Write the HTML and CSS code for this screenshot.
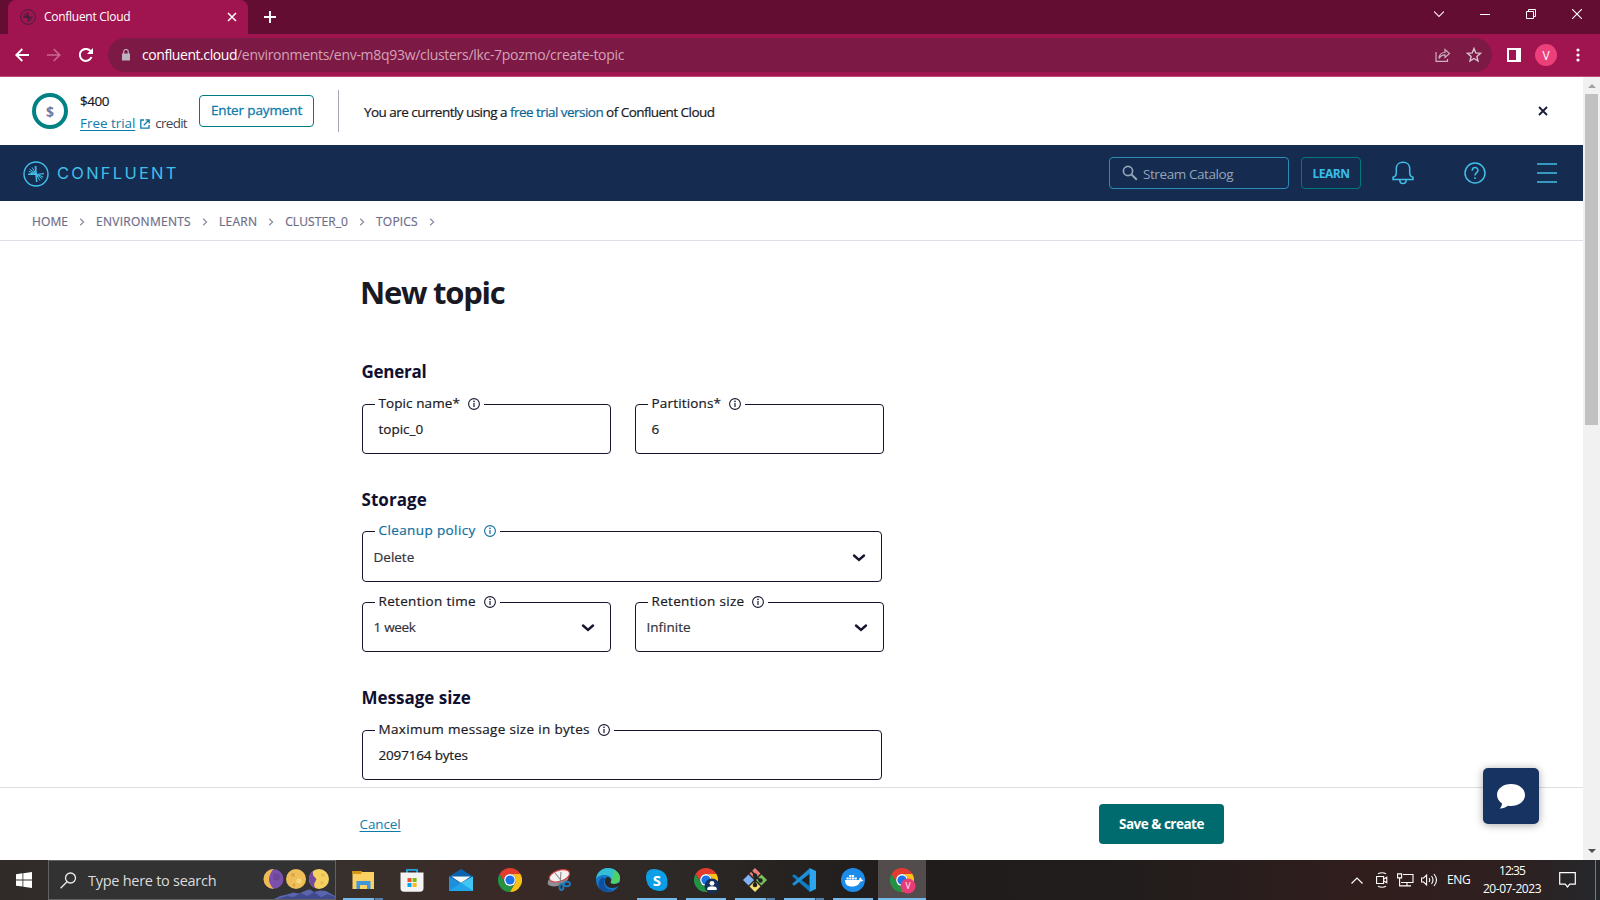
FILE: index.html
```html
<!DOCTYPE html>
<html lang="en">
<head>
<meta charset="utf-8">
<title>Confluent Cloud</title>
<link rel="stylesheet" href="styles.css">
</head>
<body>
<svg class="defs" aria-hidden="true">
  <defs>
    <symbol id="info" viewBox="0 0 12 12"><circle cx="6" cy="6" r="5.4" fill="none" stroke="currentColor" stroke-width="1.1"/><path d="M6 5v4" fill="none" stroke="currentColor" stroke-width="1.200"/><circle cx="6" cy="3.4" r=".8" fill="currentColor"/></symbol>
    <symbol id="chev" viewBox="0 0 14 10"><path d="M2 2.5l5 4.500 5-4.500" fill="none" stroke="currentColor" stroke-width="2.4" stroke-linecap="round"/></symbol>
    <symbol id="crumb" viewBox="0 0 6 8"><path d="M1.2.8L4.6 4 1.2 7.2" fill="none" stroke="currentColor" stroke-width="1.2"/></symbol>
    <symbol id="spark" viewBox="0 0 26 26">
      <circle cx="13" cy="13" r="12" fill="none" stroke="currentColor" stroke-width="1.4"/>
      <path d="M13 13L12 5M13 13L9 6.3M13 13L6.6 8M13 13L5.8 10.3M13 13l1 8M13 13l4 6.700M13 13l6.400 5M13 13l7.300 3" fill="none" stroke="currentColor"/>
      <path d="M5 13.300l6-1.300M21 12.700l-8 .8-8 0M13 5v8l.5 8" fill="none" stroke="currentColor" stroke-width="1.200"/>
    </symbol>
    <symbol id="chrome" viewBox="0 0 24 24">
      <path d="M22.4 6A12 12 0 0 0 1.6 6l5.2 9A6 6 0 0 1 12 6z" fill="#e33b2e"/>
      <path d="M1.6 6A12 12 0 0 0 12 24l5.2-9a6 6 0 0 1-10.4 0z" fill="#229342"/>
      <path d="M12 24A12 12 0 0 0 22.4 6H12a6 6 0 0 1 5.2 9z" fill="#fbc116"/>
      <circle cx="12" cy="12" r="5.9" fill="#fff"/><circle cx="12" cy="12" r="4.6" fill="#1a73e8"/>
    </symbol>
  </defs>
</svg>

<header class="tabstrip">
  <div class="tab">
    <svg class="tab-icon" width="16" height="16"><use href="#spark"/></svg>
    <span class="tab-title">Confluent Cloud</span>
    <svg width="10" height="10" viewBox="0 0 10 10"><path d="M1 1l8 8M9 1L1 9" stroke="#fff" stroke-width="1.5"/></svg>
  </div>
  <svg class="new-tab" width="12" height="12" viewBox="0 0 12 12"><path d="M6 0v12M0 6h12" stroke="#fff" stroke-width="1.9"/></svg>
  <div class="window-buttons">
    <svg width="10" height="12" viewBox="0 0 10 12"><path d="M0 3.500l5 5 5-5" fill="none" stroke="#f3e6ec" stroke-width="1.100"/></svg>
    <svg width="10" height="12" viewBox="0 0 10 12"><path d="M0 6.5h10" stroke="#fff"/></svg>
    <svg width="10" height="10" viewBox="0 0 10 10"><path d="M.5 2.5h7v7h-7zM2.5 2.5v-2h7v7h-2" fill="none" stroke="#fff"/></svg>
    <svg width="10" height="10" viewBox="0 0 10 10"><path d="M0 0l10 10M10 0L0 10" stroke="#fff" stroke-width="1.1"/></svg>
  </div>
</header>

<div class="toolbar">
  <svg width="14" height="14" viewBox="0 0 14 14"><path d="M14 7H1.5M7.3 1L1.3 7l6 6" fill="none" stroke="#fff" stroke-width="1.9"/></svg>
  <svg width="14" height="14" viewBox="0 0 14 14"><path d="M0 7h12.500M6.700 1l6 6-6 6" fill="none" stroke="#c9678f" stroke-width="1.700"/></svg>
  <svg width="14" height="14" viewBox="0 0 14 14"><path d="M12.500 9A6 6 0 1 1 11.600 3.200" fill="none" stroke="#fff" stroke-width="2"/><path d="M14 0v6H8z" fill="#fff"/></svg>
  <div class="omnibox">
    <svg width="8" height="12" viewBox="0 0 8 12"><path d="M0 4.500h8v7H0z" fill="#bcb3bd"/><path d="M1.700 5V2.800a2.300 2.300 0 0 1 4.600 0V5" fill="none" stroke="#bcb3bd" stroke-width="1.200"/></svg>
    <span class="url"><span class="host">confluent.cloud</span><span class="path">/environments/env-m8q93w/clusters/lkc-7pozmo/create-topic</span></span>
    <svg class="share" width="16" height="14" viewBox="0 0 16 14"><path d="M1 4v9.300h11.500V11M4 10.500c.3-4 2.500-6 6-6V1.500l4.500 4-4.500 4v-2.700c-2.700 0-4.500 1-6 3.700z" fill="none" stroke="#cdb0be" stroke-width="1.200"/></svg>
    <svg width="16" height="16" viewBox="0 0 16 16"><path d="M8 1.500l1.800 4.400 4.700.4-3.600 3.100 1.100 4.600L8 11.500 4 14l1.100-4.600L1.500 6.300l4.700-.4z" fill="none" stroke="#d8c3ce" stroke-width="1.400"/></svg>
  </div>
  <svg width="14" height="14" viewBox="0 0 14 14"><path d="M1 1h12v12H1z" fill="none" stroke="#fff" stroke-width="2"/><path d="M9 0h5v14H9z" fill="#fff"/></svg>
  <span class="avatar">V</span>
  <svg class="dots" width="4" height="14" viewBox="0 0 4 14" fill="#fff"><circle cx="2" cy="2" r="1.600"/><circle cx="2" cy="7" r="1.600"/><circle cx="2" cy="12" r="1.600"/></svg>
</div>

<div class="viewport">
  <div class="page">
    <section class="trial">
      <div class="coin">$</div>
      <div class="credit">
        <div class="amount">$400</div>
        <div class="credit-line"><a class="trial-link">Free trial</a><svg width="10" height="10" viewBox="0 0 10 10"><path d="M4 1H.8v8.200H9V6M5.500.8h3.700v3.700M9 1L3.800 6.200" fill="none" stroke="#0f7bab" stroke-width="1.300"/></svg><span class="credit-word">credit</span></div>
      </div>
      <button class="payment">Enter payment</button>
      <span class="divider"></span>
      <p class="notice">You are currently using a <span class="blue">free trial version</span> of Confluent Cloud</p>
      <svg width="10" height="10" viewBox="0 0 10 10"><path d="M1 1l8 8M9 1L1 9" stroke="#1b1f3b" stroke-width="1.900"/></svg>
    </section>

    <nav class="nav">
      <svg class="logo" width="26" height="26"><use href="#spark"/></svg>
      <span class="brand">CONFLUENT</span>
      <div class="search"><svg width="16" height="16" viewBox="0 0 16 16"><circle cx="6" cy="6" r="4.600" fill="none" stroke="#93a5b8" stroke-width="1.700"/><path d="M9.500 9.500l5.300 5.300" stroke="#93a5b8" stroke-width="2"/></svg><span>Stream Catalog</span></div>
      <button class="learn">LEARN</button>
      <svg class="bell" width="22" height="24" viewBox="0 0 22 24" fill="none" stroke="#41bfe8" stroke-width="1.500"><path d="M1 18.500v-2.200C3 15.800 4.300 14 4.300 11.500V7.500C4.300 3.800 7 1.300 11 1.300s6.700 2.500 6.700 6.200v4c0 2.500 1.300 4.300 3.300 4.800v2.200z"/><path d="M7.800 18.700c0 5.200 6.400 5.200 6.400 0"/></svg>
      <svg class="help" width="22" height="22" viewBox="0 0 22 22" fill="none" stroke="#41bfe8" stroke-width="1.500"><circle cx="11" cy="11" r="10"/><path d="M8.200 8.700C8.200 4.600 14 4.700 14 8.300c0 2.300-3 2.400-3 5.200"/><path d="M11 15.300v1.800"/></svg>
      <svg width="20" height="20" viewBox="0 0 20 20"><path d="M0 1h20M0 10h20M0 19h20" stroke="#41bfe8" stroke-width="1.500"/></svg>
    </nav>

    <div class="crumbs">
      <span class="c1">HOME</span><svg width="6" height="8"><use href="#crumb"/></svg>
      <span class="c2">ENVIRONMENTS</span><svg width="6" height="8"><use href="#crumb"/></svg>
      <span class="c3">LEARN</span><svg width="6" height="8"><use href="#crumb"/></svg>
      <span class="c4">CLUSTER_0</span><svg width="6" height="8"><use href="#crumb"/></svg>
      <span class="c5">TOPICS</span><svg width="6" height="8"><use href="#crumb"/></svg>
    </div>

    <main class="form">
      <h1>New topic</h1>
      <h2 class="general">General</h2>
      <div class="row">
        <div class="field"><div class="label l-topic">Topic name*<svg><use href="#info"/></svg></div><div class="value v-topic">topic_0</div></div>
        <div class="field"><div class="label l-part">Partitions*<svg><use href="#info"/></svg></div><div class="value">6</div></div>
      </div>
      <h2 class="storage">Storage</h2>
      <div class="field wide select policy"><div class="label">Cleanup policy<svg><use href="#info"/></svg></div><div class="value">Delete<svg><use href="#chev"/></svg></div></div>
      <div class="row">
        <div class="field select"><div class="label">Retention time<svg><use href="#info"/></svg></div><div class="value v-week">1 week<svg><use href="#chev"/></svg></div></div>
        <div class="field select"><div class="label">Retention size<svg><use href="#info"/></svg></div><div class="value">Infinite<svg><use href="#chev"/></svg></div></div>
      </div>
      <h2 class="size">Message size</h2>
      <div class="field wide"><div class="label">Maximum message size in bytes<svg><use href="#info"/></svg></div><div class="value v-bytes">2097164 bytes</div></div>
    </main>

    <footer class="actions">
      <a class="cancel">Cancel</a>
      <button class="save">Save &amp; create</button>
    </footer>
    <button class="chat" aria-label="Chat"><svg width="30" height="27" viewBox="0 0 30 27"><path d="M15 1C7 1 1 5.700 1 12c0 3.600 2 6.500 5 8.500-.1 2.200-.9 3.500-2.300 5 3.300.1 6-1 8.300-2.700 9 1.200 17-3.600 17-10.800C29 5.700 23 1 15 1z" fill="#fff"/></svg></button>
  </div>
  <div class="scrollbar">
    <svg width="8" height="4" viewBox="0 0 8 4"><path d="M0 4l4-4 4 4z" fill="#a3a3a8"/></svg>
    <div class="thumb"></div>
    <svg width="8" height="4" viewBox="0 0 8 4"><path d="M0 0l4 4 4-4z" fill="#505050"/></svg>
  </div>
</div>

<div class="taskbar">
  <div class="start"><svg width="16" height="16" viewBox="0 0 16 16" fill="#fff"><path d="M0 2.200L6.500 1.300v6.200H0zM7.300 1.200L16 0v7.500H7.300zM0 8.400h6.500v6.200L0 13.700zM7.300 8.400H16V16l-8.700-1.200z"/></svg></div>
  <div class="winsearch">
    <svg width="17" height="17" viewBox="0 0 17 17"><circle cx="10.500" cy="6" r="5" fill="none" stroke="#eee" stroke-width="1.300"/><path d="M7 9.800L.6 16.200" stroke="#eee" stroke-width="1.300"/></svg>
    <span>Type here to search</span>
    <svg class="moons" width="73" height="38" viewBox="0 0 73 38">
      <circle cx="11.500" cy="18" r="10" fill="#7a50aa"/><path d="M11.500 8a10 10 0 0 0 0 20C8 24 6.500 20 7 17s2-6 4.500-9z" fill="#efbb52"/><circle cx="14.500" cy="16" r="3.500" fill="#6d479c"/>
      <circle cx="34" cy="18" r="10" fill="#efc05a"/><circle cx="31" cy="14" r="2" fill="#dfa54c"/><circle cx="37" cy="20" r="2.600" fill="#f8d77c"/><circle cx="32" cy="24" r="1.500" fill="#dda248"/>
      <circle cx="57" cy="18" r="10" fill="#f5d260"/><path d="M51 10a10 10 0 0 0 3 17.500c-2-2-2.500-4-1-6.500s2-3 0-4.500-2.500-4-2-6.500z" fill="#73499f"/><circle cx="61" cy="14" r="1.800" fill="#e5bb58"/><circle cx="60" cy="22" r="1.800" fill="#e5bb58"/>
      <path d="M12 38l6-3 7-1.500 6-2 6 1 8-3.500 3-.5 4 2.500 6-1.500 6 .5 9 5v3z" fill="#5a65ae"/><path d="M16 38l9-3 6 1 8-4 6 3 7-4 7 5 7-3 7 3v2z" fill="#414b8c"/>
    </svg>
  </div>
  <div class="apps">
    <div class="app run"><svg viewBox="0 0 24 24"><path d="M1.500 3h9v1H23v17H1.500z" fill="#fbd164"/><path d="M1.500 3h9v3h-9z" fill="#d9960f"/><path d="M5.500 21v-8h14v8h-3.500v-4H9v4z" fill="#3f97dd"/></svg><i class="split"></i></div>
    <div class="app"><svg viewBox="0 0 24 24"><path d="M7 6V1.800h10V6" fill="none" stroke="#22a3e6" stroke-width="1.800"/><path d="M.5 4.500h23V20q0 3.800-3.500 3.800H4Q.5 23.800.5 20z" fill="#f3f3f4"/><path d="M7.500 10h4v4h-4z" fill="#f0502b"/><path d="M12.600 10h4v4h-4z" fill="#7fba0a"/><path d="M7.500 15h4v4h-4z" fill="#00a4ef"/><path d="M12.600 15h4v4h-4z" fill="#fdb813"/></svg></div>
    <div class="app"><svg viewBox="0 0 24 24"><path d="M0 8.500L12 1l12 7.500v4H0z" fill="#0a63ae"/><path d="M2.500 8.500h19L12 15z" fill="#f7f7f7"/><path d="M0 8.500l12 6.500 12-6.500V23H0z" fill="#1c90dd"/><path d="M24 8.500V23L12 15z" fill="#3fc6f4"/><path d="M0 23l12-8 12 8z" fill="#22a6ea"/></svg></div>
    <div class="app"><svg viewBox="0 0 24 24"><use href="#chrome" width="24" height="24"/></svg></div>
    <div class="app"><svg viewBox="0 0 24 24"><ellipse cx="11" cy="12" rx="11" ry="5.500" fill="#8f9095" transform="rotate(-20 11 12)"/><ellipse cx="12.500" cy="8" rx="10.500" ry="5.500" fill="#f2f2f2" stroke="#d94444" stroke-width="1.200" transform="rotate(-18 12 8)"/><path d="M8 5l9 11M14 4l-1 12" stroke="#888" stroke-width="1.100"/><g fill="none" stroke="#2279b8" stroke-width="1.900"><ellipse cx="14.500" cy="19" rx="2" ry="3"/><ellipse cx="20" cy="16" rx="3" ry="2.200"/></g></svg></div>
    <div class="app"><svg viewBox="0 0 24 24"><circle cx="12" cy="12" r="12" fill="#1677c8"/><path d="M0 11C1 4 6 0 12 0c7 0 12 5 12 10 0 4-3 6-6 6-3 0-4-1-3-2 2-3-1-7-6-7-5 0-8 2-9 4z" fill="#35bfd4"/><path d="M18 1.700c4 2 6 5.300 6 8.300 0 4-3 6-6 6-3 0-4-1-3-2 1.500-2 2-8 3-12.300z" fill="#4fd06a"/><path d="M9 12c-1 5 3 8 7 8 3 0 5-.8 7-2.500l2-3.500-4 1.500c-3 1-7 .5-6.500-1.500 1.500-2-.5-5-2.500-5s-2.500 1.500-3 3z" fill="#2b2726"/><path d="M9 11c-3 6 1 11 8 11-7 4-15 0-14.500-6C3 11 7 8 9 11z" fill="#104f9e"/></svg></div>
    <div class="app run full"><svg viewBox="0 0 24 24"><rect x="1" y="1" width="16" height="16" rx="7" fill="#1299e0"/><rect x="7" y="7" width="15.500" height="16" rx="7" fill="#1299e0"/><circle cx="12" cy="12" r="10.300" fill="#0c9fe5"/><text x="12" y="17.500" text-anchor="middle" class="skype">S</text></svg></div>
    <div class="app run full"><svg viewBox="0 0 24 24"><use href="#chrome" width="24" height="24"/><circle cx="18" cy="18" r="7.500" fill="#16305c"/><circle cx="18" cy="15.300" r="2.400" fill="#fff"/><path d="M13.300 22v-1.500c0-3 9.400-3 9.400 0V22z" fill="#fff"/></svg></div>
    <div class="app run"><svg viewBox="0 0 24 24"><path d="M12 0l5.500 5.500L12 11 6.500 5.500z" fill="#ee7e79"/><path d="M5.500 6.500L11 12l-5.500 5.500L0 12z" fill="#7fb1f4"/><path d="M18.500 6.500L24 12l-5.500 5.500L13 12z" fill="#79c35b"/><path d="M12 13l5.500 5.500L12 24l-5.500-5.500z" fill="#f7dd74"/><path d="M8 2.500l4 4.500v10M12 8l6 5" fill="none" stroke="#222" stroke-width="1.800"/><g fill="#222"><circle cx="12" cy="7.500" r="2.200"/><circle cx="12" cy="17" r="2.300"/><circle cx="17.500" cy="12.500" r="2.200"/></g></svg><i class="split"></i></div>
    <div class="app run"><svg viewBox="0 0 24 24"><path d="M17.500 0L24 3v18l-6.500 3z" fill="#2aa5ee"/><path d="M0 8l2.200-1.700L18 18.500V24z" fill="#0f7dc6"/><path d="M0 16l2.200 1.700L18 5.500V0z" fill="#1b8fda"/></svg><i class="split"></i></div>
    <div class="app run full"><svg viewBox="0 0 24 24"><circle cx="12" cy="12" r="12" fill="#1d8bea"/><path d="M4 12h14c.2-1.500.9-2.300 1.500-2.600.8.6 1 1.400.9 2 .8 0 1.500.2 2 .6-.6 1.200-1.600 1.500-3 1.500C18 16.500 15.500 18.500 11 18.500c-4.500 0-7-2-7-6.500z" fill="#fff"/><path d="M5.500 9.500h2.200v2H5.500zM8.200 9.500h2.200v2H8.200zM10.900 9.500h2.200v2h-2.200zM13.600 9.500h2.200v2h-2.200zM8.200 7h2.200v2H8.200zM10.900 7h2.200v2h-2.200z" fill="#fff"/></svg></div>
    <div class="app run active"><svg viewBox="0 0 24 24"><use href="#chrome" width="24" height="24"/><circle cx="18" cy="18" r="7.500" fill="#e93b78"/><text x="18" y="21" text-anchor="middle" class="badge">V</text></svg></div>
  </div>
  <div class="tray">
    <svg class="t1" width="12" height="7" viewBox="0 0 12 7"><path d="M.5 6.500L6 1l5.500 5.500" fill="none" stroke="#fff" stroke-width="1.200"/></svg>
    <svg class="t2" width="12" height="16" viewBox="0 0 12 16" fill="none" stroke="#fff" stroke-width="1.100"><path d="M.6 4.500h7v7h-7zM7.800 7l3-1.800v5.600L7.800 9M2 1.700q4-2 8 0M2 14.300q4 2 8 0"/></svg>
    <svg class="t3" width="17" height="14" viewBox="0 0 17 14" fill="none" stroke="#fff" stroke-width="1.100"><path d="M6 1.500h10v8H4M10 9.500v3M6 12.900h8M.6.900h4v4h-4zM2.600 5v7.900H6"/></svg>
    <svg class="t4" width="17" height="14" viewBox="0 0 17 14" fill="none" stroke="#fff" stroke-width="1.100"><path d="M.6 5v4h2l3 3V2l-3 3zM8 5q1.500 2 0 4M10.500 3q3 4 0 8M13 1q5 6 0 12"/></svg>
    <span class="lang">ENG</span>
    <div class="clock"><span class="time">12:35</span><span>20-07-2023</span></div>
    <svg class="note" width="17" height="16" viewBox="0 0 17 16"><path d="M.7.700h15.600v11.500h-5.500L8.500 15l-2.300-2.800H.7z" fill="none" stroke="#fff" stroke-width="1.200"/></svg>
    <span class="peek"></span>
  </div>
</div>
</body>
</html>
```
FILE: styles.css
```css
* { box-sizing: border-box; }
body { margin: 0; width: 1600px; height: 900px; overflow: hidden; display: flex; flex-direction: column; font-family: "Open Sans", "Noto Sans", sans-serif; font-size: 13.5px; color: #191924; background: #fff; white-space: nowrap; }
svg { flex: none; display: block; }
button { font-family: inherit; background: none; padding: 0; border: 0; }
h1, h2, p { margin: 0; }
.defs { position: absolute; width: 0; height: 0; }

/* Browser chrome */
.tabstrip { height: 34px; background: #640d32; display: flex; align-items: center; padding-left: 8px; flex: none; }
.tab { width: 240px; height: 34px; border-radius: 8px 8px 0 0; background: #a0154f; display: flex; align-items: center; padding: 0 11px 0 12px; }
.tab-icon { color: #34203c; }
.tab-title { flex: 1; margin-left: 8px; margin-top: -1px; color: #fff; font-size: 12px; letter-spacing: -.28px; }
.new-tab { margin-left: 16px; }
.window-buttons { margin-left: auto; display: flex; align-items: center; gap: 36px; padding-right: 18px; margin-top: -6px; }
.toolbar { height: 43px; background: #a0154f; border-bottom: 1px solid #c04b7a; display: flex; align-items: center; padding-left: 15px; flex: none; }
.toolbar > svg:nth-child(2), .toolbar > svg:nth-child(3) { margin-left: 18px; }
.omnibox { width: 1384px; height: 34px; border-radius: 17px; background: #7d1945; margin-left: 15px; display: flex; align-items: center; padding: 0 10px 0 14px; margin-right: 15px; }
.url { margin-left: 12px; font-size: 14px; flex: 1; margin-top: -1px; }
.host { color: #fff; letter-spacing: -.43px; }
.path { color: #d3a3b8; letter-spacing: -.3px; }
.share { margin-right: 15px; }
.avatar { width: 22px; height: 22px; border-radius: 50%; background: #ec407a; color: #fff; font-size: 12px; display: flex; align-items: center; justify-content: center; margin-left: 14px; }
.dots { margin-left: 19px; }

/* Page area */
.viewport { height: 783px; display: flex; flex: none; }
.page { width: 1583px; display: flex; flex-direction: column; position: relative; }
.scrollbar { width: 17px; background: #f1f1f1; display: flex; flex-direction: column; align-items: center; padding: 7px 0 7px; }
.thumb { width: 13px; height: 331px; background: #c1c1c1; margin: 6px 0 auto; }

.trial { height: 68px; display: flex; align-items: center; padding-left: 32px; flex: none; }
.coin { width: 36px; height: 36px; border: 4px solid #008184; border-radius: 50%; display: flex; align-items: center; justify-content: center; font-weight: 700; font-size: 14px; color: #77779a; flex: none; }
.credit { width: 131px; padding-left: 12px; flex: none; margin-top: 2px; }
.amount { font-size: 13.500px; line-height: 22px; letter-spacing: -.5px; -webkit-text-stroke: .2px; }
.credit-line { display: flex; align-items: center; line-height: 22px; }
.trial-link { color: #0f7bab; text-decoration: underline; text-underline-offset: 2px; letter-spacing: -.05px; }
.credit-line svg { margin: 2px 5px 0 5px; }
.credit-word { color: #464650; letter-spacing: -.75px; }
.payment { width: 115px; height: 32px; border: 1px solid #007b84; border-radius: 4px; color: #0f7bab; font-size: 13.500px; line-height: 18px; padding-bottom: 2px; letter-spacing: -.13px; -webkit-text-stroke: .3px; flex: none; }
.divider { width: 1px; height: 42px; background: #a6a6b8; margin-left: 24px; flex: none; }
.notice { margin-left: 25px; margin-top: 1px; flex: 1; letter-spacing: -.54px; -webkit-text-stroke: .2px; }
.blue { color: #0a6595; }
.trial > svg { margin-right: 35px; }

.nav { height: 56px; background: #152b50; display: flex; align-items: center; padding-left: 23px; flex: none; }
.logo { color: #41bfe8; margin-top: 1px; }
.brand { font-family: Inter, sans-serif; font-weight: 400; font-size: 16.500px; letter-spacing: 2.250px; color: #41bfe8; margin-left: 8px; flex: 1; }
.search { width: 180px; height: 32px; border: 1px solid #2a8fb8; border-radius: 4px; display: flex; align-items: center; padding-left: 12px; gap: 5px; color: #93a5b8; letter-spacing: -.42px; }
.search span { margin-top: 2px; }
.learn { width: 60px; height: 32px; margin-left: 12px; border: 1px solid #00797e; border-radius: 4px; color: #38bdec; font-size: 12px; font-weight: 700; letter-spacing: -.45px; }
.bell { margin-left: 31px; margin-right: 50px; }
.help { margin-right: 51px; }
.nav > svg:last-child { margin-right: 26px; }

.crumbs { height: 40px; border-bottom: 1px solid #dedee6; display: flex; align-items: center; padding: 2px 0 0 32px; font-size: 12px; color: #6d6d88; -webkit-text-stroke: .2px; flex: none; }
.crumbs svg { margin: 0 11px; color: #8b8ba3; }
.c1 { letter-spacing: .1px; }
.c2 { letter-spacing: .27px; }
.c3 { letter-spacing: .25px; }
.c4 { letter-spacing: .1px; }
.c5 { letter-spacing: .2px; }

/* Form */
.form { height: 546px; padding: 31px 0 0 362px; overflow: hidden; flex: none; }
h1 { font-size: 31px; line-height: 40px; font-weight: 700; letter-spacing: -1.250px; margin-left: -2px; }
h2 { font-size: 17px; line-height: 24px; font-weight: 700; color: #0f1030; }
h2.general { margin: 48px 0 20px -.5px; letter-spacing: -.25px; }
h2.storage { margin: 34px 0 19px -.5px; letter-spacing: .05px; }
h2.size { margin: 34px 0 20px -.5px; }
.row { display: flex; gap: 24px; }
.field { width: 249px; height: 50px; border: 1px solid #15162e; border-radius: 4px; padding-left: 12px; display: flex; flex-direction: column; align-items: flex-start; line-height: 20px; }
.wide { width: 520px; }
.label { margin-top: -12px; background: #fff; padding: 0 4px 0 3.500px; display: flex; align-items: center; font-size: 13.500px; letter-spacing: .32px; -webkit-text-stroke: .2px; flex: none; }
.label svg { width: 12px; height: 12px; margin: 1px 0 0 8px; color: #191a33; }
.l-topic { letter-spacing: .09px; }
.l-part { letter-spacing: .17px; }
.value { margin: 6px 0 0 3.500px; font-size: 13.500px; -webkit-text-stroke: .2px; }
.v-topic { letter-spacing: 0; }
.v-bytes { letter-spacing: -.17px; }
.select .value { margin-left: -1.500px; align-self: stretch; display: flex; align-items: center; justify-content: space-between; color: #33333b; letter-spacing: 0; }
.select .v-week { letter-spacing: -.3px; }
.select .value svg { width: 14px; height: 10px; margin: 1px 15px 0 0; color: #15162e; }
.policy { height: 51px; margin-bottom: 20px; }
.policy .label, .policy .label svg { color: #0f6f9f; }
.policy .label { letter-spacing: .39px; }
.policy .value { margin-top: 7px; }

.actions { height: 73px; border-top: 1px solid #dedee0; display: flex; align-items: center; justify-content: space-between; padding: 0 359px 0 359.500px; }
.cancel { color: #0f7bab; text-decoration: underline; text-underline-offset: 2px; letter-spacing: -.1px; }
.save { width: 125px; height: 40px; border-radius: 4px; background: #006b6e; color: #fff; font-weight: 700; font-size: 13.500px; letter-spacing: -.5px; }
.chat { position: absolute; left: 1483px; top: 691px; width: 56px; height: 56px; border-radius: 5px; background: #173361; box-shadow: 0 1px 8px rgba(0,0,0,.35); display: flex; align-items: center; justify-content: center; }

/* Desktop taskbar */
.taskbar { height: 40px; display: flex; background: linear-gradient(90deg, #302b29 0, #38302c 22%, #3a2926 32%, #2c2927 42%, #1f1c1b 56%, #211d1c 70%, #301e1d 85%, #2f1f1f 94%, #25282b 100%); color: #fff; flex: none; }
.start { width: 48px; display: flex; align-items: center; justify-content: center; }
.winsearch { width: 288px; border: 1px solid #626262; background: #323232; display: flex; align-items: center; padding-left: 11px; color: #dcdcdc; font-size: 14.500px; letter-spacing: -.27px; position: relative; }
.winsearch span { margin-left: 11px; flex: 1; }
.moons { align-self: flex-end; }
.apps { display: flex; margin-left: 3px; gap: 1px; }
.app { width: 48px; display: flex; justify-content: center; align-items: center; position: relative; }
.app svg { width: 24px; height: 24px; overflow: visible; }
.run::after { content: ""; position: absolute; left: 4px; right: 4px; bottom: 0; height: 2px; background: #76b9ed; }
.split { position: absolute; right: 4px; bottom: 0; width: 9px; height: 2px; background: #527faa; border-left: 1px solid #34495d; z-index: 1; }
.active { background: #524c4c; }
.active::after { left: 0; right: 0; }
.skype { font-size: 15px; font-weight: 700; fill: #fff; }
.badge { font-size: 8.500px; fill: #fff; }
.tray { margin-left: auto; display: flex; align-items: center; font-size: 12px; }
.t2 { margin-left: 13px; }
.t3 { margin-left: 9px; }
.t4 { margin-left: 7px; }
.lang { margin-left: 9px; width: 24px; letter-spacing: -.35px; margin-top: -1px; }
.clock { width: 58px; margin-left: 12px; display: flex; flex-direction: column; align-items: center; line-height: 18px; letter-spacing: -.45px; }
.time { letter-spacing: -.9px; }
.note { margin-left: 18px; margin-right: 19px; }
.peek { width: 1px; height: 40px; background: #77797a; margin-right: 4px; }
```
